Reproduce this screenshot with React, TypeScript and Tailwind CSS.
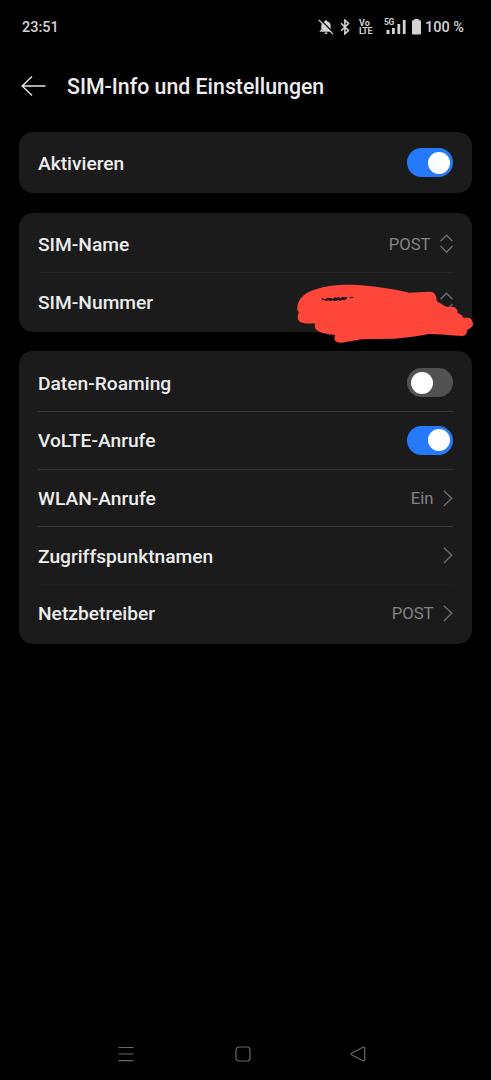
import type { ReactNode } from 'react'

function Card({ children }: { children: ReactNode }) {
  return <section className="relative rounded-[14px] bg-[#1b1b1b] px-[19px] pt-[3px] pb-px">{children}</section>
}

interface RowProps {
  label: string
  value?: string
  divider?: string
  children?: ReactNode
}

function Row({ label, value, divider = 'border-transparent', children }: RowProps) {
  return (
    <div className={`flex h-[57.7px] items-center justify-between border-b ${divider}`}>
      <span className="pt-[2px] text-[19.2px] leading-6 font-medium text-[#ededed]">{label}</span>
      <div className="flex items-center">
        {value && <span className="mr-[9.5px] pt-[2px] text-[16.7px] leading-6 text-[#838383]">{value}</span>}
        {children}
      </div>
    </div>
  )
}

function Toggle({ on = false }: { on?: boolean }) {
  return (
    <button
      role="switch"
      aria-checked={on}
      className={`flex h-[29px] w-[46px] items-center rounded-full px-[3.5px] ${on ? 'justify-end bg-[#2579fa]' : 'justify-start bg-[#525252]'}`}
    >
      <span className="size-[22px] rounded-full bg-white" />
    </button>
  )
}

function Chevron() {
  return (
    <svg className="h-[17px] w-[10px]" viewBox="0 0 10 17" fill="none" stroke="#707070" strokeWidth="1.3">
      <path d="M.8 .7 8.8 8.3 .8 16" />
    </svg>
  )
}

function UpDown() {
  return (
    <svg className="h-5 w-[13px]" viewBox="0 0 13 20" fill="none" stroke="#707070" strokeWidth="1.3">
      <path d="M.5 7.3 6.5 1.2 12.5 7.3M.5 12 6.5 18.2 12.5 12" />
    </svg>
  )
}

function Scribble() {
  return (
    <svg className="absolute top-[7.5px] left-[266px] h-[130px] w-[200px]" viewBox="0 0 600 390">
      <path
        fill="#ff463b"
        d="M37 260C40 236 60 219 84 211C120 197 165 193 215 195C275 199 325 207 372 218L435 215C448 216 456 226 455 243C467 250 475 257 485 260L506 261C516 265 519 273 518 280C528 282 532 287 534 293L552 293C562 298 566 308 563 317C560 323 553 326 547 329C547 340 542 347 532 348C498 346 464 342 432 342C400 349 365 353 330 356L230 358L170 368C158 369 150 364 148 356L150 345C133 343 113 340 103 335C91 330 87 321 90 310C76 311 57 312 47 307C36 300 36 287 42 277C37 273 36 267 37 260Z"
      />
      <path
        fill="#211615"
        d="M107 238L116 235L119 239L126 233L132 235L138 233L143 236L149 232L157 233L162 231L166 235L172 231L187 231L185 237L178 241L170 239L166 243L159 240L153 244L143 241L137 244L130 241L123 243L118 241ZM192 233L200 230L208 232L199 235Z"
      />
    </svg>
  )
}

function StatusBar() {
  return (
    <header className="flex h-[54px] items-center justify-between pr-[27px] pl-[22px] text-[#d3d3d3]">
      <span className="pt-[2px] text-[14.5px] font-medium">23:51</span>
      <div className="flex items-center">
        <svg className="mr-[6px] h-4 w-4" viewBox="0 0 16 16">
          <path fill="currentColor" d="M8 1.2c.7 0 1.1.5 1.1 1.1C11.6 3 12.7 4.7 12.7 7v3.4l1.7 1.7v.6H1.6v-.6l1.7-1.7V7C3.3 4.7 4.4 3 6.9 2.3c0-.6.4-1.1 1.1-1.1ZM6.4 13.5h3.2c-.2 1.1-.8 1.5-1.6 1.5s-1.4-.4-1.6-1.5Z" />
          <path stroke="#000" strokeWidth="1.3" d="M2 .3 16 14.2" />
          <path stroke="currentColor" strokeWidth="1.3" d="M.7.9 15 15.1" />
        </svg>
        <svg className="mr-[9px] h-4 w-[10px]" viewBox="0 0 10 16" fill="none" stroke="currentColor" strokeWidth="1.6">
          <path d="M1.1 4.3 8.5 11.5 4.9 14.8V1.2L8.5 4.5 1.1 11.7" />
        </svg>
        <div className="mr-[11px] w-[14px] text-[9px] leading-[8px] font-bold">
          <div>Vo</div>
          <div className="tracking-[-0.5px]">LTE</div>
        </div>
        <div className="relative mr-[6px] h-4 w-[22px]">
          <span className="absolute -top-px left-0 text-[8.5px] leading-[9px] font-bold tracking-[-0.4px]">5G</span>
          <svg className="h-4 w-[22px]" viewBox="0 0 22 16" fill="currentColor">
            <path d="M2.5 11h3v4h-3zM8 9h2.8v6H8zM13.4 5h2.8v10h-2.8zM18.8 1h2.8v14h-2.8z" />
          </svg>
        </div>
        <svg className="mr-1 h-4 w-[9px]" viewBox="0 0 9 16" fill="currentColor">
          <path d="M2.3 0h4.4v1.3H8q1 0 1 1v12.2q0 1-1 1H1q-1 0-1-1V2.3q0-1 1-1h1.3z" />
        </svg>
        <span className="pt-[2px] text-[14.5px] font-medium whitespace-nowrap">100 %</span>
      </div>
    </header>
  )
}

function NavBar() {
  return (
    <nav className="flex h-[53px] items-center justify-between pr-[125px] pl-[118px] text-[#686868]">
      <svg className="h-4 w-4" viewBox="0 0 16 16" stroke="currentColor" strokeWidth="1.2">
        <path d="M.5 1.5h15M.5 8h15M.5 14.7h15" />
      </svg>
      <svg className="ml-px h-4 w-4" viewBox="0 0 16 16" fill="none" stroke="currentColor" strokeWidth="1.2">
        <rect x="1" y="1" width="14" height="14" rx="3" />
      </svg>
      <svg className="h-4 w-4" viewBox="0 0 16 16" fill="none" stroke="currentColor" strokeWidth="1.2" strokeLinejoin="round">
        <path d="M1.6 7.3 13 1.3q1.7-.6 1.7 1v11.4q0 1.6-1.7 1L1.6 8.7q-1-.7 0-1.4Z" />
      </svg>
    </nav>
  )
}

export default function App() {
  return (
    <div className="flex h-[1080px] w-[491px] flex-col bg-black font-['Roboto',sans-serif]">
      <StatusBar />
      <div className="flex h-[64px] items-center pl-[21px]">
        <svg className="mr-[21px] h-5 w-[25px]" viewBox="0 0 25 20" fill="none" stroke="#e5e5e5" strokeWidth="1.4">
          <path d="M11 .6 1.2 10 11 19.4M1.2 10H24.5" />
        </svg>
        <h1 className="pt-px text-[21.3px] font-medium text-[#ededed]">SIM-Info und Einstellungen</h1>
      </div>
      <main className="flex grow flex-col gap-[19.4px] px-[19px] pt-[13.5px]">
        <Card>
          <Row label="Aktivieren">
            <Toggle on />
          </Row>
        </Card>
        <Card>
          <Row label="SIM-Name" value="POST" divider="border-[#232323]">
            <UpDown />
          </Row>
          <Row label="SIM-Nummer">
            <UpDown />
          </Row>
          <Scribble />
        </Card>
        <Card>
          <Row label="Daten-Roaming" divider="border-[#363636]">
            <Toggle />
          </Row>
          <Row label="VoLTE-Anrufe" divider="border-[#303030]">
            <Toggle on />
          </Row>
          <Row label="WLAN-Anrufe" value="Ein" divider="border-[#3a3a3a]">
            <Chevron />
          </Row>
          <Row label="Zugriffspunktnamen" divider="border-[#1f1f1f]">
            <Chevron />
          </Row>
          <Row label="Netzbetreiber" value="POST">
            <Chevron />
          </Row>
        </Card>
      </main>
      <NavBar />
    </div>
  )
}
